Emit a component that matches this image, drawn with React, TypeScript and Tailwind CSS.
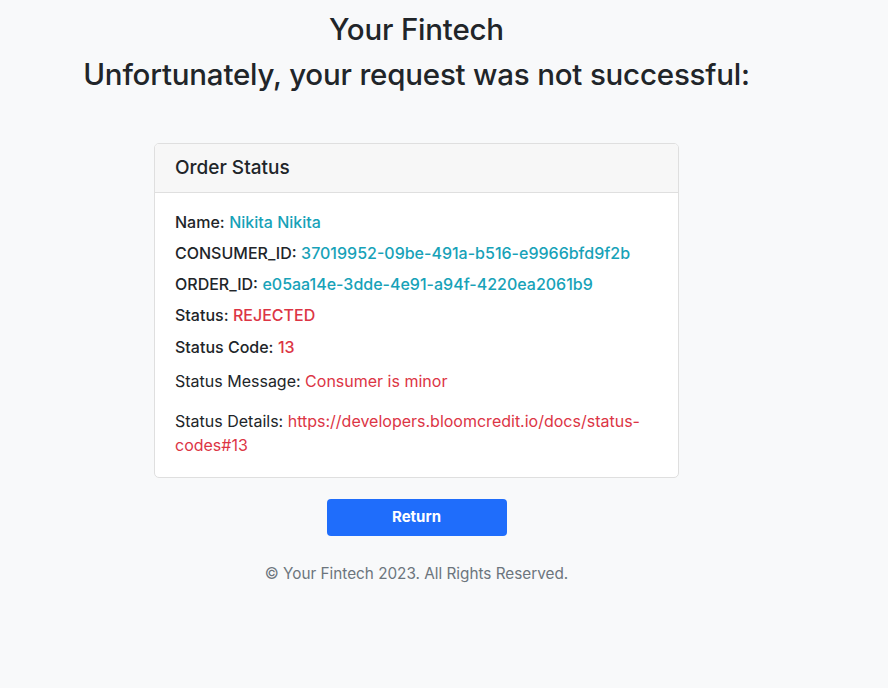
export default function App() {
  const rows = [
    { label: "Name:", value: "Nikita Nikita", color: "text-[#17a2b8]", mb: "mb-[7px]", bold: true },
    { label: "CONSUMER_ID:", value: "37019952-09be-491a-b516-e9966bfd9f2b", color: "text-[#17a2b8]", mb: "mb-[7px]", bold: true },
    { label: "ORDER_ID:", value: "e05aa14e-3dde-4e91-a94f-4220ea2061b9", color: "text-[#17a2b8]", mb: "mb-[7px]", bold: true },
    { label: "Status:", value: "REJECTED", color: "text-[#dc3545]", mb: "mb-[8px]", bold: true },
    { label: "Status Code:", value: "13", color: "text-[#dc3545]", mb: "mb-[10px]", bold: true },
    { label: "Status Message:", value: "Consumer is minor", color: "text-[#dc3545]", mb: "mb-[16px]", bold: false },
  ];

  return (
    <div className="min-h-[688px] bg-[#f8f9fa] font-['Inter','Liberation_Sans',sans-serif] text-[#212529]">
      <div className="w-[833px] flex flex-col items-center pt-[12px]">
        {/* headings */}
        <h2 className="text-[29.5px] leading-[35px] font-medium tracking-[-0.2px]">Your Fintech</h2>
        <h2 className="text-[29.5px] leading-[35px] font-medium tracking-[-0.2px] mt-[10px]">
          Unfortunately, your request was not successful:
        </h2>

        {/* card */}
        <div className="mt-[51px] w-[525px] bg-white border border-[#dfdfdf] rounded-[5px] overflow-hidden">
          <div className="bg-[#f7f7f7] border-b border-[#dfdfdf] px-5 py-3 text-[19px] leading-6 font-medium">
            Order Status
          </div>
          <div className="px-5 pt-[17px] pb-[20px] text-[16px] leading-6">
            {rows.map((row) => (
              <p key={row.label} className={row.mb}>
                <span className={row.bold ? "font-medium" : ""}>{row.label}</span>{" "}
                <span className={row.color + (row.bold ? " font-medium" : "")}>{row.value}</span>
              </p>
            ))}
            <p>
              Status Details:{" "}
              <span className="text-[#dc3545]">https://developers.bloomcredit.io/docs/status-codes#13</span>
            </p>
          </div>
        </div>

        {/* button */}
        <button className="mt-[21px] w-[180px] h-[37px] rounded-[4px] bg-[#1f6dfb] text-white font-bold text-[15px]">
          Return
        </button>

        <p className="mt-[26px] text-[15.3px] leading-6 text-[#6c757d]">© Your Fintech 2023. All Rights Reserved.</p>
      </div>
    </div>
  );
}
